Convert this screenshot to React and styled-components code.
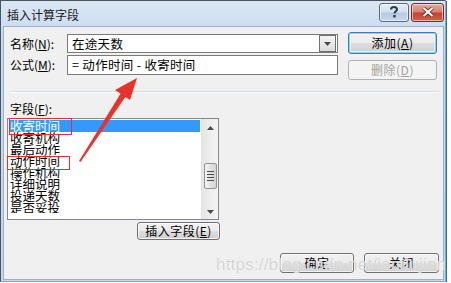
import React from 'react';
import styled, { createGlobalStyle, css } from 'styled-components';

const Global = createGlobalStyle`
    html, body {
        margin: 0;
        padding: 0;
        background: #ffffff;
    }
    body {
        font-family: "Noto Sans CJK SC", "DejaVu Sans", sans-serif;
        font-size: 12px;
        color: #000;
    }
`;

const Window = styled.div`
    position: relative;
    width: 444px;
    height: 280px;
    display: flex;
    flex-direction: column;
    background: linear-gradient(180deg, #dbe7f5 0%, #c9dbef 12%, #c4d7ee 100%);
    border-left: 1px solid #4b5560;
    border-top: 1px solid #4b5560;
    border-right: 1px solid #5fb7e5;
    border-bottom: 1px solid #5fb7e5;
    box-shadow: 1px 1px 0 #3d6d8a;
    overflow: hidden;
`;

const TitleBar = styled.div`
    height: 25px;
    display: flex;
    align-items: center;
    padding: 0 1px 0 6px;
    flex-shrink: 0;
`;

const Title = styled.div`
    flex: 1;
    font-size: 12px;
    line-height: 14px;
    padding-top: 3px;
    color: #1a1a1a;
`;

const CaptionButtons = styled.div`
    display: flex;
    gap: 2px;
    margin-top: -3px;
`;

const CaptionButton = styled.div`
    width: ${p => p.$w}px;
    height: 17px;
    border: 1px solid #5b6b80;
    border-radius: 3px;
    display: flex;
    align-items: center;
    justify-content: center;
    box-shadow: inset 0 0 0 1px rgba(255, 255, 255, 0.55);
    background: ${p => p.$close
        ? 'linear-gradient(180deg, #e9a99d 0%, #dc8170 45%, #c6422e 55%, #d0604a 100%)'
        : 'linear-gradient(180deg, #e6eef8 0%, #d3e0ef 45%, #b8cbe2 55%, #c7d8ec 100%)'};
    ${p => p.$close && css`border-color: #7a2a20;`}
`;

const Client = styled.div`
    flex: 1;
    margin: 0 1px 1px 2px;
    background: #f0f0f0;
    border: 1px solid #9fb0c4;
    display: flex;
    flex-direction: column;
    padding: 4px 4px 0 3px;
`;

const Top = styled.div`
    display: flex;
    height: 52px;
`;

const FormCol = styled.div`
    display: flex;
    flex-direction: column;
    padding-top: 3px;
    gap: 2px;
`;

const FieldRow = styled.div`
    display: flex;
    align-items: center;
    height: ${p => p.$h}px;
`;

const Label = styled.div`
    width: 57px;
    padding-left: 3px;
    font-size: 12px;
    line-height: 14px;
    white-space: nowrap;
`;

const Input = styled.div`
    width: 271px;
    height: 100%;
    box-sizing: border-box;
    background: #fff;
    border: 1px solid #7a7a7a;
    display: flex;
    align-items: center;
    padding-left: 4px;
    font-size: 12.5px;
    line-height: 14px;
    letter-spacing: 0.3px;
`;

const InputText = styled.div`
    flex: 1;
    white-space: pre;
`;

const DropButton = styled.div`
    width: 15px;
    height: 15px;
    margin-right: 1px;
    border: 1px solid #707070;
    background: linear-gradient(180deg, #f4f4f4, #dcdcdc);
    display: flex;
    align-items: center;
    justify-content: center;
`;

const ButtonCol = styled.div`
    display: flex;
    flex-direction: column;
    gap: 6px;
    margin-left: 10px;
    padding-top: 1px;
`;

const Button = styled.div`
    width: ${p => p.$w}px;
    height: ${p => p.$h}px;
    box-sizing: border-box;
    border: 1px solid #707070;
    border-radius: 3px;
    background: linear-gradient(180deg, #f2f2f2 0%, #ebebeb 48%, #dddddd 52%, #cfcfcf 100%);
    box-shadow: inset 0 0 0 1px rgba(255, 255, 255, 0.7);
    display: flex;
    align-items: center;
    justify-content: center;
    font-size: 12px;
    line-height: 14px;
    letter-spacing: 0.5px;
    ${p => p.$focus && css`
        border-color: #3c7fb1;
        box-shadow: inset 0 0 0 1px #7fd6f7, inset 0 0 0 2px rgba(255,255,255,0.6);
    `}
    ${p => p.$disabled && css`
        border-color: #adb2b5;
        background: #f4f4f4;
        color: #a3a3a3;
        box-shadow: none;
    `}
`;

const Separator = styled.div`
    height: 1px;
    margin: 8px 0 0 3px;
    background: #d6dfe8;
    border-bottom: 1px solid #ffffff;
`;

const ListLabel = styled.div`
    margin-top: 9px;
    padding-left: 3px;
    font-size: 12px;
    line-height: 14px;
    height: 16px;
`;

const ListBox = styled.div`
    position: relative;
    width: 212px;
    height: 102px;
    box-sizing: border-box;
    border: 1px solid #828790;
    background: #fff;
    display: flex;
`;

const Items = styled.div`
    flex: 1;
    padding: 1px 1px 0 1px;
    overflow: hidden;
`;

const Item = styled.div`
    height: 11.6px;
    line-height: 11.6px;
    font-size: 12.5px;
    padding-left: 1px;
    overflow: hidden;
    white-space: nowrap;
    ${p => p.$selected && css`
        background: #3399ff;
        color: #fff;
        height: 12px;
    `}
`;

const ScrollBar = styled.div`
    width: 16px;
    background: linear-gradient(90deg, #e6e6e6, #f4f4f4);
    border-left: 1px solid #e2e2e2;
    display: flex;
    flex-direction: column;
    align-items: center;
    justify-content: space-between;
    padding: 7px 0 5px;
`;

const Thumb = styled.div`
    width: 13px;
    height: 26px;
    box-sizing: border-box;
    border: 1px solid #959595;
    border-radius: 2px;
    background: linear-gradient(90deg, #f3f3f3, #e2e2e2 50%, #d3d3d3);
    display: flex;
    flex-direction: column;
    align-items: center;
    justify-content: center;
    gap: 2px;
    margin-top: 22px;
    margin-bottom: 10px;
`;

const Grip = styled.div`
    width: 7px;
    height: 1px;
    background: #4d4d4d;
`;

const Mark = styled.div`
    position: absolute;
    left: ${p => p.$x}px;
    top: ${p => p.$y}px;
    width: ${p => p.$w}px;
    height: ${p => p.$h}px;
    border: 1.5px solid #e8302a;
    box-sizing: border-box;
    pointer-events: none;
`;

const InsertRow = styled.div`
    display: flex;
    padding: 2px 0 0 130px;
`;

const Footer = styled.div`
    display: flex;
    justify-content: flex-end;
    gap: 10px;
    margin-top: 13px;
`;

const Watermark = styled.div`
    position: absolute;
    left: 215px;
    top: 254px;
    font-family: "Liberation Sans", Arial, sans-serif;
    font-size: 17px;
    letter-spacing: 0.2px;
    color: rgba(205, 205, 205, 0.85);
    text-shadow: 0 0 1px #fff;
    pointer-events: none;
    white-space: nowrap;
`;

const Arrow = styled.svg`
    position: absolute;
    left: 0;
    top: 0;
    pointer-events: none;
`;

const Tri = ({ down }) => (
    <svg width="7" height="4" viewBox="0 0 7 4">
        <path d={down ? 'M0 0H7L3.5 4Z' : 'M0 4H7L3.5 0Z'} fill="#4a4a4a" />
    </svg>
);

const fields = ['收寄时间', '收寄机构', '最后动作', '动作时间', '操作机构', '详细说明', '投递天数', '是否妥投'];

export default function App() {
    return (
        <>
            <Global />
            <Window>
                <TitleBar>
                    <Title>插入计算字段</Title>
                    <CaptionButtons>
                        <CaptionButton $w={28}>
                            <svg width="10" height="12" viewBox="0 0 10 12">
                                <path d="M2 3.5C2 1.5 3.5 1 5 1S8 2 8 3.5C8 5 5.5 5.5 5.5 7.5" fill="none" stroke="#2b3a4c" strokeWidth="2" />
                                <rect x="4.3" y="9" width="2.4" height="2.4" fill="#2b3a4c" />
                            </svg>
                        </CaptionButton>
                        <CaptionButton $w={31} $close>
                            <svg width="12" height="10" viewBox="0 0 12 10">
                                <path d="M1.5 1L10.5 9M10.5 1L1.5 9" stroke="#5a1a12" strokeWidth="3.6" />
                                <path d="M1.5 1L10.5 9M10.5 1L1.5 9" stroke="#fff" strokeWidth="2.2" />
                            </svg>
                        </CaptionButton>
                    </CaptionButtons>
                </TitleBar>
                <Client>
                    <Top>
                        <FormCol>
                            <FieldRow $h={19}>
                                <Label>名称(<u>N</u>):</Label>
                                <Input>
                                    <InputText>在途天数</InputText>
                                    <DropButton><Tri down /></DropButton>
                                </Input>
                            </FieldRow>
                            <FieldRow $h={20}>
                                <Label>公式(<u>M</u>):</Label>
                                <Input>
                                    <InputText>= 动作时间 - 收寄时间</InputText>
                                </Input>
                            </FieldRow>
                        </FormCol>
                        <ButtonCol>
                            <Button $w={89} $h={22} $focus>添加(<u>A</u>)</Button>
                            <Button $w={89} $h={20} $disabled>删除(<u>D</u>)</Button>
                        </ButtonCol>
                    </Top>
                    <Separator />
                    <ListLabel>字段(<u>F</u>):</ListLabel>
                    <ListBox>
                        <Items>
                            {fields.map((f, i) => (
                                <Item key={f} $selected={i === 0}>{f}</Item>
                            ))}
                        </Items>
                        <ScrollBar>
                            <Tri />
                            <Thumb><Grip /><Grip /><Grip /><Grip /></Thumb>
                            <Tri down />
                        </ScrollBar>
                        <Mark $x={1} $y={-1} $w={63} $h={17} />
                        <Mark $x={-1} $y={37} $w={63} $h={14} />
                    </ListBox>
                    <InsertRow>
                        <Button $w={83} $h={18}>插入字段(<u>E</u>)</Button>
                    </InsertRow>
                    <Footer>
                        <Button $w={74} $h={20}>确定</Button>
                        <Button $w={75} $h={20}>关闭</Button>
                    </Footer>
                </Client>
                <Watermark>https://blog.csdn.net/iamlujiong</Watermark>
                <Arrow width="444" height="280" viewBox="0 0 444 280">
                    <polygon points="78,160 79.5,161 125,95 120,92" fill="#e8322c" />
                    <polygon points="136,77 114,89 129,99" fill="#e8322c" />
                </Arrow>
            </Window>
        </>
    );
}
